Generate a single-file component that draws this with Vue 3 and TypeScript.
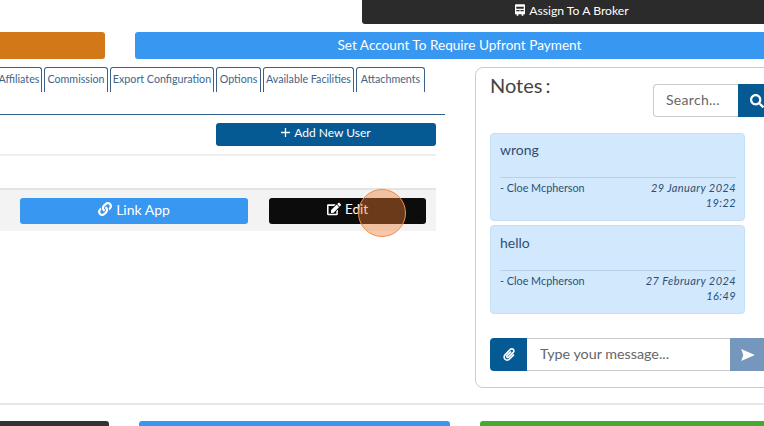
<script setup lang="ts">
const tabs = [
  { label: 'Affiliates', width: 46 },
  { label: 'Commission', width: 64 },
  { label: 'Export Configuration', width: 104 },
  { label: 'Options', width: 45 },
  { label: 'Available Facilities', width: 91 },
  { label: 'Attachments', width: 69 },
]
const notes = [
  { text: 'wrong', author: '- Cloe Mcpherson', date: '29 January 2024', time: '19:22' },
  { text: 'hello', author: '- Cloe Mcpherson', date: '27 February 2024', time: '16:49' },
]
</script>

<template>
  <div class="page">
    <div class="row-top">
      <div class="btn broker">
        <svg class="ic" viewBox="0 0 12 14"><path fill="currentColor" fill-rule="evenodd" d="M1 0h10a1 1 0 0 1 1 1v11h-2v2H8v-2H4v2H2v-2H0V1a1 1 0 0 1 1-1zm.5 3v2.5h9V3h-9zm0 4v1.5h4V7h-4zm5 0v1.5h4V7h-4z"/></svg>
        Assign To A Broker
      </div>
    </div>
    <div class="row-actions">
      <div class="btn orange"></div>
      <div class="btn upfront">Set Account To Require Upfront Payment</div>
    </div>
    <div class="main">
      <div class="left">
        <div class="tabs">
          <div v-for="t in tabs" :key="t.label" class="tab" :style="{ width: t.width + 'px' }">{{ t.label }}</div>
        </div>
        <div class="tab-line"></div>
        <div class="user-body">
          <div class="add-row">
            <div class="btn add">
              <svg class="plus" viewBox="0 0 10 10"><path d="M5 0v10M0 5h10" stroke="currentColor" stroke-width="1.4"/></svg>
              Add New User
            </div>
          </div>
          <div class="empty-row"></div>
          <div class="user-row">
            <div class="btn link">
              <svg class="ic" viewBox="0 0 512 512"><path fill="currentColor" d="M326.612 185.391c59.747 59.809 58.927 155.698.36 214.59-.11.12-.24.25-.36.37l-67.2 67.2c-59.27 59.27-155.699 59.262-214.96 0-59.27-59.26-59.27-155.7 0-214.96l37.106-37.106c9.84-9.84 26.786-3.3 27.294 10.606.648 17.722 3.826 35.527 9.69 52.721 1.986 5.822.567 12.262-3.783 16.612l-13.087 13.087c-28.026 28.026-28.905 73.66-1.155 101.96 28.024 28.579 74.086 28.749 102.325.51l67.2-67.19c28.191-28.191 28.073-73.757 0-101.83-3.701-3.694-7.429-6.564-10.341-8.569a16.037 16.037 0 0 1-6.947-12.606c-.396-10.567 3.348-21.456 11.698-29.806l21.054-21.055c5.521-5.521 14.182-6.199 20.584-1.731a152.482 152.482 0 0 1 20.522 17.197zM467.547 44.449c-59.261-59.262-155.69-59.27-214.96 0l-67.2 67.2c-.12.12-.25.25-.36.37-58.566 58.892-59.387 154.781.36 214.59a152.454 152.454 0 0 0 20.521 17.196c6.402 4.468 15.064 3.789 20.584-1.731l21.054-21.055c8.35-8.35 12.094-19.239 11.698-29.806a16.037 16.037 0 0 0-6.947-12.606c-2.912-2.005-6.64-4.875-10.341-8.569-28.073-28.073-28.191-73.639 0-101.83l67.2-67.19c28.239-28.239 74.3-28.069 102.325.51 27.75 28.3 26.872 73.934-1.155 101.96l-13.087 13.087c-4.35 4.35-5.769 10.79-3.783 16.612 5.864 17.194 9.042 34.999 9.69 52.721.509 13.906 17.454 20.446 27.294 10.606l37.106-37.106c59.271-59.259 59.271-155.699.001-214.959z"/></svg>
              Link App
            </div>
            <div class="btn edit">
              <svg class="ic" viewBox="0 0 576 512"><path fill="currentColor" d="M402.6 83.2l90.2 90.2c3.8 3.8 3.8 10 0 13.8L274.4 405.6l-92.8 10.3c-12.4 1.4-22.9-9.1-21.5-21.5l10.3-92.8L388.8 83.2c3.8-3.8 10-3.8 13.8 0zm162-22.9l-48.8-48.8c-15.2-15.2-39.9-15.2-55.2 0l-35.4 35.4c-3.8 3.8-3.8 10 0 13.8l90.2 90.2c3.8 3.8 10 3.8 13.8 0l35.4-35.4c15.2-15.3 15.2-40 0-55.2zM384 346.2V448H64V128h229.8c3.2 0 6.2-1.3 8.5-3.5l40-40c7.6-7.6 2.2-20.5-8.5-20.5H48C21.5 64 0 85.5 0 112v352c0 26.5 21.5 48 48 48h352c26.5 0 48-21.5 48-48V306.2c0-10.7-12.9-16-20.5-8.5l-40 40c-2.2 2.3-3.5 5.3-3.5 8.5z"/></svg>
              Edit
              <span class="click-dot"></span>
            </div>
          </div>
        </div>
      </div>
      <div class="notes">
        <div class="notes-head">
          <div class="notes-title">Notes<span class="colon">:</span></div>
          <div class="search">
            <div class="search-input">Search...</div>
            <div class="search-btn">
              <svg class="ic" viewBox="0 0 512 512"><path fill="currentColor" d="M505 442.7L405.3 343c-4.5-4.5-10.6-7-17-7H372c27.6-35.3 44-79.7 44-128C416 93.1 322.9 0 208 0S0 93.1 0 208s93.1 208 208 208c48.3 0 92.7-16.4 128-44v16.3c0 6.4 2.5 12.5 7 17l99.7 99.7c9.4 9.4 24.6 9.4 33.9 0l28.3-28.3c9.4-9.4 9.4-24.6.1-34zM208 336c-70.7 0-128-57.2-128-128 0-70.7 57.2-128 128-128 70.7 0 128 57.2 128 128 0 70.7-57.2 128-128 128z"/></svg>
            </div>
          </div>
        </div>
        <div class="note-list">
          <div v-for="n in notes" :key="n.text" class="note">
            <div class="note-text">{{ n.text }}</div>
            <div class="note-foot">
              <div class="note-author">{{ n.author }}</div>
              <div class="note-date">{{ n.date }}<br />{{ n.time }}</div>
            </div>
          </div>
        </div>
        <div class="composer">
          <div class="attach">
            <svg class="ic" viewBox="0 0 448 512"><path fill="currentColor" d="M43.246 466.142c-58.43-60.289-57.341-157.511 1.386-217.581L254.392 34c44.316-45.332 116.351-45.336 160.671 0 43.89 44.894 43.943 117.329 0 162.276L232.214 383.128c-29.855 30.537-78.633 30.111-107.982-.998-28.275-29.97-27.368-77.473 1.452-106.953l143.743-146.835c6.182-6.314 16.312-6.422 22.626-.241l22.861 22.379c6.315 6.182 6.422 16.312.241 22.626L171.427 319.927c-4.932 5.045-5.236 13.428-.648 18.292 4.372 4.634 11.245 4.711 15.688.165l182.849-186.851c19.613-20.062 19.613-52.725-.011-72.798-19.189-19.627-49.957-19.637-69.154 0L90.39 293.295c-34.763 35.56-35.299 93.12-1.191 128.313 34.01 35.093 88.985 35.137 123.058.286l172.06-175.999c6.177-6.319 16.307-6.433 22.626-.256l22.877 22.364c6.319 6.177 6.434 16.307.256 22.626l-172.06 175.998c-59.576 60.938-155.943 60.216-214.77-.485z"/></svg>
          </div>
          <div class="msg">Type your message...</div>
          <div class="send">
            <svg class="ic send-ic" viewBox="0 0 16 14"><path fill="currentColor" d="M0 0l16 7-16 7 2.5-7z"/></svg>
          </div>
        </div>
      </div>
    </div>
    <div class="divider"></div>
    <div class="row-bottom">
      <div class="btn b-dark"></div>
      <div class="btn b-blue"></div>
      <div class="btn b-green"></div>
    </div>
  </div>
</template>

<style>
html, body { margin: 0; background: #fff; }
</style>

<style scoped>
.page {
  width: 764px;
  height: 426px;
  overflow: hidden;
  font-family: Lato, "Open Sans", sans-serif;
  color: #333;
  background: #fff;
}
.btn {
  display: flex;
  align-items: center;
  justify-content: center;
  gap: 4px;
  color: #fff;
  border-radius: 3px;
  flex: none;
  box-sizing: border-box;
}
.ic { width: 14px; height: 14px; flex: none; }
.row-top { display: flex; padding-left: 362px; height: 24px; }
.broker { width: 440px; height: 24px; background: #2b2b2b; font-size: 12.2px; border-radius: 0 0 3px 3px; padding: 0 20px 4px 0; }
.broker .ic { width: 10px; height: 12px; }
.row-actions { display: flex; gap: 30px; margin: 8px 0 0 -40px; height: 27px; }
.orange { width: 145px; height: 27px; background: #d27818; }
.upfront { width: 660px; height: 27px; background: #3797f1; font-size: 13.6px; padding: 0 11px 2px 0; }
.main { display: flex; margin-top: 8px; }
.left { width: 445px; flex: none; overflow: hidden; }
.tabs { display: flex; gap: 2px; height: 25px; margin-left: -4px; }
.tab {
  border: 1px solid #3a6288;
  border-bottom: 0;
  border-radius: 3px 3px 0 0;
  padding: 3px 0 0;
  font-size: 10.7px;
  line-height: 16px;
  text-align: center;
  color: #3f6488;
  white-space: nowrap;
  box-sizing: border-box;
  flex: none;
}
.tab-line { border-top: 1px solid #2f5f8a; margin-top: 22px; width: 445px; }
.user-body { width: 436px; }
.add-row { display: flex; justify-content: flex-end; padding: 8px 0 8px; border-bottom: 2px solid #eee; }
.add { width: 220px; height: 23px; background: #055a94; font-size: 12px; padding-bottom: 5px; }
.plus { width: 9px; height: 9px; }
.empty-row { height: 32px; }
.user-row {
  display: flex;
  gap: 21px;
  padding: 8px 10px 7px 20px;
  background: #f3f3f3;
  border-top: 2px solid #e4e4e4;
}
.link { width: 228px; height: 26px; background: #3797f1; font-size: 14px; padding-bottom: 4px; }
.edit { width: 157px; height: 26px; background: #0c0c0c; font-size: 13.5px; position: relative; padding-bottom: 4px; }
.click-dot {
  position: absolute;
  left: 89px;
  top: -9px;
  width: 48px;
  height: 48px;
  box-sizing: border-box;
  border-radius: 50%;
  border: 1px solid #f0904a;
  background: rgba(240, 125, 50, 0.42);
}
.notes {
  margin-left: 30px;
  width: 320px;
  height: 321px;
  flex: none;
  box-sizing: border-box;
  border: 1px solid #ccc;
  border-radius: 8px;
  padding: 0 14px;
}
.notes-head { display: flex; justify-content: space-between; height: 65px; }
.notes-title { font-size: 20px; line-height: 24px; margin-top: 5px; color: #444; }
.colon { margin-left: 3px; }
.search { display: flex; margin-top: 16px; height: 33px; margin-right: 2px; }
.search-input {
  width: 85px;
  box-sizing: border-box;
  border: 1px solid #ccc;
  border-right: 0;
  border-radius: 4px 0 0 4px;
  padding-left: 12px;
  line-height: 29px;
  font-size: 14px;
  letter-spacing: 0.3px;
  color: #666;
}
.search-btn { width: 40px; background: #055a94; color: #fff; display: flex; align-items: center; padding-left: 12px; box-sizing: border-box; }
.note-list { display: flex; flex-direction: column; gap: 4px; }
.note {
  width: 255px;
  height: 88px;
  box-sizing: border-box;
  background: #d2e8fd;
  border: 1px solid #c4e0f8;
  border-radius: 4px;
  padding: 8px 8px 0 9px;
  color: #2f4f72;
}
.note:last-child { height: 89px; padding-top: 9px; }
.note-text { font-size: 14px; line-height: 16px; height: 35px; }
.note-foot { display: flex; justify-content: space-between; border-top: 1px solid #b5d2ea; padding-top: 2px; font-size: 10.8px; line-height: 15px; }
.note-date { text-align: right; font-style: italic; font-size: 11px; letter-spacing: 0.4px; }
.composer { display: flex; margin-top: 24px; height: 33px; width: 320px; }
.attach { width: 37px; background: #055a94; color: #fff; display: flex; align-items: center; justify-content: center; border-radius: 4px 0 0 4px; }
.attach .ic { width: 12px; height: 13px; }
.msg {
  width: 203px;
  box-sizing: border-box;
  border: 1px solid #ccc;
  border-left: 0;
  border-right: 0;
  padding-left: 13px;
  line-height: 29px;
  font-size: 14.3px;
  color: #666;
}
.send { width: 50px; background: #7597bd; color: #fff; display: flex; align-items: center; padding-left: 11px; box-sizing: border-box; }
.send-ic { width: 14px; height: 12px; }
.divider { border-top: 2px solid #e8e8e8; margin-top: 15px; }
.row-bottom { display: flex; gap: 30px; margin: 16px 0 0 -30px; height: 30px; }
.b-dark { width: 139px; height: 30px; background: #333; }
.b-blue { width: 311px; height: 30px; background: #3797f1; }
.b-green { width: 320px; height: 30px; background: #45aa30; }
</style>
